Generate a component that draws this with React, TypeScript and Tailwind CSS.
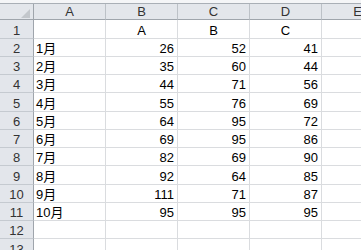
const cols = ['A', 'B', 'C', 'D', 'E'];

const heights = [19, 18, 18, 18, 19, 18, 18, 18, 19, 18, 18, 18, 19];

type Cell = string | number;

const data: Cell[][] = [
  ['', 'A', 'B', 'C'],
  ['1月', 26, 52, 41],
  ['2月', 35, 60, 44],
  ['3月', 44, 71, 56],
  ['4月', 55, 76, 69],
  ['5月', 64, 95, 72],
  ['6月', 69, 95, 86],
  ['7月', 82, 69, 90],
  ['8月', 92, 64, 85],
  ['9月', 111, 71, 87],
  ['10月', 95, 95, 95],
  [],
  [],
];

function BodyCell({ value, first }: { value?: Cell; first?: boolean }) {
  const isNum = typeof value === 'number';
  const align = isNum ? 'justify-end pr-[3px]' : first ? 'justify-start pl-[2px]' : 'justify-center';
  return (
    <div
      className={`w-[72px] shrink-0 flex items-end pb-[1px] border-r border-b border-[#dadcdf] ${align}`}
    >
      {value}
    </div>
  );
}

export default function App() {
  return (
    <div
      className="w-[361px] h-[250px] overflow-hidden bg-white text-[13px] leading-none text-black"
      style={{ fontFamily: '"Liberation Sans", "Noto Sans CJK JP", sans-serif' }}
    >
      <div className="h-[3px] bg-[#f4f5f7]" />
      {/* column headers */}
      <div className="flex h-[17px] border-t border-[#a9afb6] bg-[#e3e6eb]">
        <div className="relative w-[34px] shrink-0 border-r border-b border-[#9fa5ac]">
          <svg className="absolute left-[21px] top-[5px]" width="9" height="9" viewBox="0 0 9 9">
            <polygon points="9,0 9,9 0,9" fill="#c3c7cc" />
          </svg>
        </div>
        {cols.map((c) => (
          <div
            key={c}
            className="w-[72px] shrink-0 flex items-center justify-center border-r border-b border-r-[#bcc1c7] border-b-[#9fa5ac] text-[#333]"
          >
            {c}
          </div>
        ))}
      </div>
      {heights.map((h, i) => {
        const row = data[i] ?? [];
        return (
          <div key={i} className="flex" style={{ height: h }}>
            <div className="w-[34px] shrink-0 flex items-end justify-center pb-[1px] bg-[#e3e6eb] border-r border-b border-r-[#9fa5ac] border-b-[#c5cad0] text-[#333]">
              {i + 1}
            </div>
            {cols.map((c, j) => (
              <BodyCell key={c} value={row[j]} first={j === 0} />
            ))}
          </div>
        );
      })}
    </div>
  );
}
